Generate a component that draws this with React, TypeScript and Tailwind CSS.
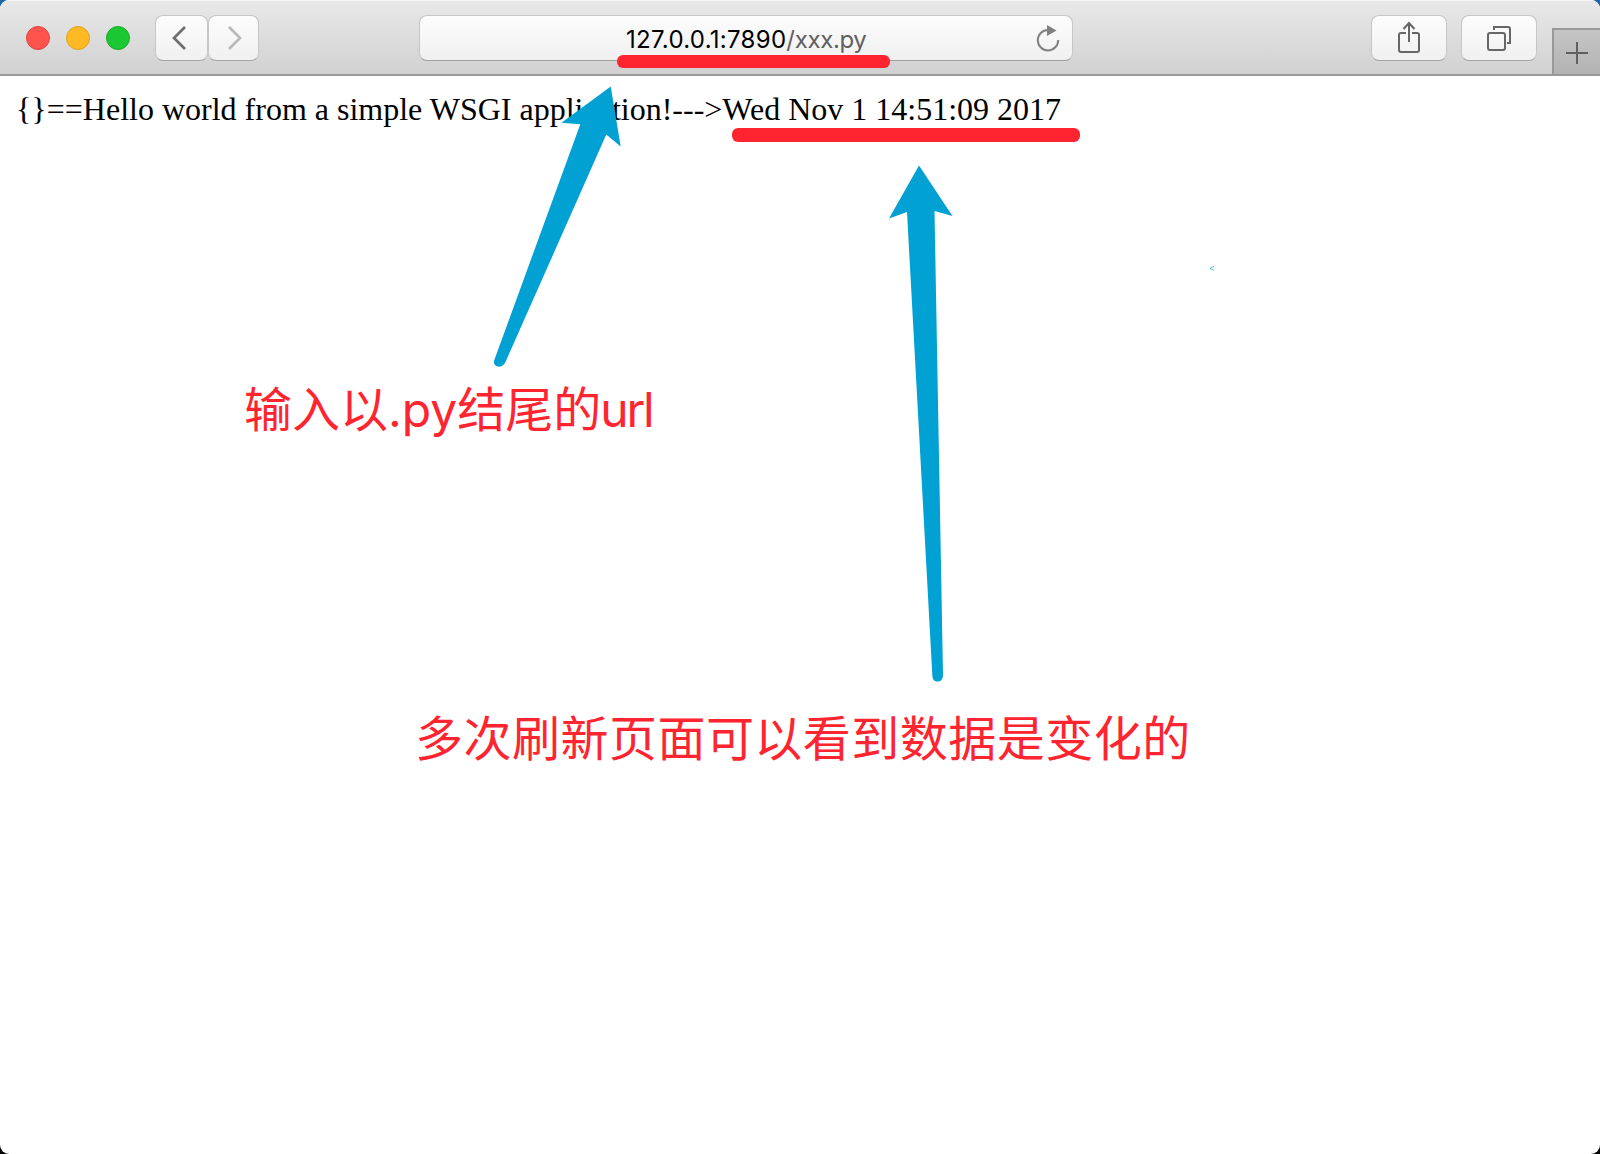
import type { ReactNode } from 'react';

function ToolButton({ className, children }: { className: string; children: ReactNode }) {
  return (
    <button
      className={`flex h-[46px] shrink-0 items-center justify-center rounded-[8px] border border-[#c6c6c6] border-b-[#a5a5a5] bg-linear-to-b from-[#fdfdfd] to-[#f0f0f0] ${className}`}
    >
      {children}
    </button>
  );
}

function Toolbar() {
  return (
    <header className="relative flex h-[76px] items-start border-b-2 border-[#999999] bg-linear-to-b from-[#e9e9e9] to-[#d1d1d1] pl-[26px] shadow-[inset_0_1px_0_#f6f6f6]">
      <div className="mt-[26px] flex gap-4">
        <span className="size-6 rounded-full border border-[#e0443e] bg-[#ff544d]" />
        <span className="size-6 rounded-full border border-[#dea123] bg-[#ffb924]" />
        <span className="size-6 rounded-full border border-[#1aab29] bg-[#1bc732]" />
      </div>
      <div className="mt-[15px] ml-[25px] flex">
        <ToolButton className="w-[53px]">
          <svg className="-ml-[6px] h-6 w-[14px]" viewBox="0 0 14 24" fill="none" stroke="#6e6e6e" strokeWidth="2.7">
            <path d="M13 1 2 12l11 11" />
          </svg>
        </ToolButton>
        <ToolButton className="w-[51px]">
          <svg className="ml-[3px] h-6 w-[14px]" viewBox="0 0 14 24" fill="none" stroke="#b9b9b9" strokeWidth="2.7">
            <path d="m1 1 11 11L1 23" />
          </svg>
        </ToolButton>
      </div>
      <div className="mt-[15px] ml-[160px] flex h-[46px] w-[654px] items-center rounded-[8px] border border-[#c6c6c6] border-b-[#a0a0a0] bg-linear-to-b from-[#fdfdfd] to-[#f0f0f0] pr-[11px] pl-[206px]">
        <span className="mt-[3px] font-['Inter'] text-[24px] leading-[46px] tracking-[-0.35px] whitespace-nowrap text-[#606060]">
          <span className="tracking-[0.29px] text-black">127.0.0.1:7890</span>/xxx.py
        </span>
        <svg className="-mt-px ml-auto h-[28px] w-[26px]" viewBox="0 0 26 28" fill="none">
          <path d="M13 6A10.2 10.2 0 1 0 23.2 16" stroke="#808080" strokeWidth="2" />
          <path d="M12 1v11l9.5-5.5z" fill="#808080" />
        </svg>
      </div>
      <div className="mt-[15px] ml-[298px] flex gap-[14px]">
        <ToolButton className="w-[76px]">
          <svg className="-mt-[2px] h-[32px] w-[24px]" viewBox="0 0 24 32" fill="none" stroke="#666666" strokeWidth="2">
            <path d="M9 12H4a2 2 0 0 0-2 2v15a2 2 0 0 0 2 2h16a2 2 0 0 0 2-2V14a2 2 0 0 0-2-2h-5M12 21V2M6.500 8 12 2l5.500 6" />
          </svg>
        </ToolButton>
        <ToolButton className="w-[76px]">
          <svg className="h-[26px] w-[26px]" viewBox="0 0 26 26" fill="none" stroke="#666666" strokeWidth="2">
            <rect x="2" y="8" width="17" height="17" rx="2" />
            <path d="M8 5V2h14a2 2 0 0 1 2 2v14h-3" />
          </svg>
        </ToolButton>
      </div>
      <button className="mt-7 ml-auto flex h-[46px] w-12 items-center justify-center border-t-2 border-l-2 border-[#999999] bg-linear-to-b from-[#c5c5c5] to-[#b3b3b3] pt-[2px]">
        <svg className="size-[22px]" viewBox="0 0 22 22" stroke="#606060" strokeWidth="2">
          <path d="M0 11h22M11 0v22" />
        </svg>
      </button>
    </header>
  );
}

function Annotations() {
  return (
    <div className="pointer-events-none absolute inset-0">
      <div className="absolute top-[55px] left-[617px] h-[13px] w-[273px] rounded-[6px] bg-[#ff2530]" />
      <div className="absolute top-[128px] left-[732px] h-[14px] w-[348px] rounded-[6px] bg-[#ff2530]" />
      <svg className="absolute inset-0 h-[1154px] w-[1600px]" viewBox="0 0 1600 1154" fill="#01a1d3">
        <path d="M610.700 86.500 620.700 146.500 606.300 134.500 505.500 362C503.500 366 500 367.500 497 366.300 494 365 493.500 362.500 494.300 360L580.300 124.200 561.500 122.800Z" />
        <path d="M919 165.500 952.500 216 934.500 211 943 675C943 679.500 940.500 681.500 937.500 681.500 934 681.500 932.500 679.500 932.300 675L907 212 889 218.500Z" />
        <path d="M1214 266.300 1210 268.500 1214 270.500" fill="none" stroke="#01a1d3" strokeOpacity="0.7" />
      </svg>
      <p className="absolute top-[375px] left-[244px] font-['Inter','Noto_Sans_CJK_SC',sans-serif] text-[48px] leading-[70px] font-normal whitespace-nowrap text-[#ff2530]">
        输入以.py结尾的<span className="-ml-px tracking-[-2.200px]">url</span>
      </p>
      <p className="absolute top-[700px] left-[415px] font-['Noto_Sans_CJK_SC',sans-serif] text-[48px] leading-[70px] tracking-[0.480px] whitespace-nowrap text-[#ff2530]">
        多次刷新页面可以看到数据是变化的
      </p>
    </div>
  );
}

export default function App() {
  return (
    <div className="h-[1154px] w-[1600px] bg-linear-to-b from-[#1f68ac] from-50% to-black to-50%">
      <div className="relative h-full overflow-hidden rounded-[9px] bg-white">
        <Toolbar />
        <main className="px-4 pt-[15px]">
          <p className="font-['Liberation_Serif',serif] text-[32px] leading-9 whitespace-nowrap text-black">
            {'{}==Hello world from a simple WSGI application!--->Wed Nov 1 14:51:09 2017'}
          </p>
        </main>
        <Annotations />
      </div>
    </div>
  );
}
